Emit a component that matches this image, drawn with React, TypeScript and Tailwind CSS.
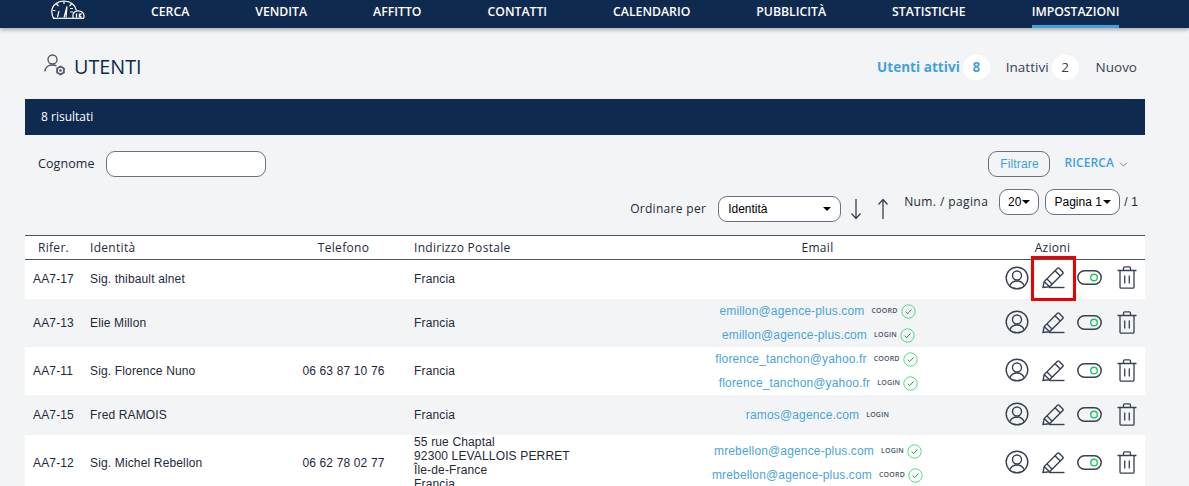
import { ChevronDown } from "lucide-react";

const navItems = ["CERCA", "VENDITA", "AFFITTO", "CONTATTI", "CALENDARIO", "PUBBLICITÀ", "STATISTICHE"];

type Mail = { address: string; tag: string; checked: boolean; offset: string };
type User = { ref: string; name: string; phone?: string; address: string[]; mails: Mail[]; height: string; shaded: boolean };

const users: User[] = [
  { ref: "AA7-17", name: "Sig. thibault alnet", address: ["Francia"], mails: [], height: "h-[39px] pb-[2px]", shaded: false },
  {
    ref: "AA7-13",
    name: "Elie Millon",
    address: ["Francia"],
    height: "h-[48px]",
    shaded: true,
    mails: [
      { address: "emillon@agence-plus.com", tag: "COORD", checked: true, offset: "" },
      { address: "emillon@agence-plus.com", tag: "LOGIN", checked: true, offset: "pl-[2px]" },
    ],
  },
  {
    ref: "AA7-11",
    name: "Sig. Florence Nuno",
    phone: "06 63 87 10 76",
    address: ["Francia"],
    height: "h-[48px]",
    shaded: false,
    mails: [
      { address: "florence_tanchon@yahoo.fr", tag: "COORD", checked: true, offset: "pr-[2px]" },
      { address: "florence_tanchon@yahoo.fr", tag: "LOGIN", checked: true, offset: "pl-[2px]" },
    ],
  },
  {
    ref: "AA7-15",
    name: "Fred RAMOIS",
    address: ["Francia"],
    height: "h-[40px]",
    shaded: true,
    mails: [{ address: "ramos@agence.com", tag: "LOGIN", checked: false, offset: "pl-[3px]" }],
  },
  {
    ref: "AA7-12",
    name: "Sig. Michel Rebellon",
    phone: "06 62 78 02 77",
    address: ["55 rue Chaptal", "92300 LEVALLOIS PERRET", "Île-de-France", "Francia"],
    height: "h-[56px]",
    shaded: false,
    mails: [
      { address: "mrebellon@agence-plus.com", tag: "LOGIN", checked: true, offset: "pl-[1px]" },
      { address: "mrebellon@agence-plus.com", tag: "COORD", checked: true, offset: "" },
    ],
  },
];

function GaugeLogo() {
  return (
    <svg width="34" height="20" viewBox="0 0 34 20" fill="none" stroke="#ffffff" strokeWidth="1.200">
      {/* big dial */}
      <path d="M4 18.300 H2.500 C1.300 16 0.800 14 0.800 11.500 C0.800 5.500 6.500 1 13 1 C19.500 1 24.500 5 25.500 10.500" />
      <path d="M2 18.300 H33" />
      <path d="M13 1 V4 M5.500 4 L7.500 6 M20.500 4 L18.500 6 M1.500 10.500 H4.500" />
      <path d="M6.500 17 L8 11 M13 17.500 L16 6.500 L15 17.500" />
      <path d="M19 8.500 H22 M19 12 H22" strokeWidth="0.900" />
      {/* small dial */}
      <path d="M22 18 V15 C22 12.500 24.500 10.800 27 10.800 C30.500 10.800 33 13 33 15.500 V18" />
      <path d="M25.500 13.500 V17.500 M28.500 13.500 V17.500 M28.500 15.500 L30.500 13.500 M28.500 15.500 L30.500 17.500" strokeWidth="1.300" />
    </svg>
  );
}

function UserGearIcon() {
  return (
    <svg width="23" height="23" viewBox="0 0 23 23" fill="none" stroke="#4b5563" strokeWidth="1.300">
      <circle cx="8.500" cy="5.500" r="4.500" />
      <path d="M1 17.500 C1 13.500 4 11 8.500 11 C10 11 11.500 11.300 12.500 11.800" />
      <path d="M16.500 11.500 L20.800 14 V19 L16.500 21.500 L12.200 19 V14 Z" fill="#4b5563" stroke="none" />
      <circle cx="16.500" cy="16.500" r="2" stroke="#f3f4f6" strokeWidth="1.300" />
    </svg>
  );
}

function ProfileIcon() {
  return (
    <svg width="24" height="24" viewBox="0 0 24 24" fill="none" stroke="#374151" strokeWidth="1.400">
      <circle cx="12" cy="12" r="10.800" />
      <circle cx="12" cy="9.500" r="4.500" />
      <path d="M4.800 19.800 C6 16.800 8.500 15 12 15 C15.500 15 18 16.800 19.200 19.800" />
    </svg>
  );
}

function PencilIcon() {
  return (
    <svg width="23" height="23" viewBox="0 0 23 23" fill="none" stroke="#374151" strokeWidth="1.400">
      <path d="M1 21.500 L2.200 15.500 L15.500 2.200 C16 1.700 16.600 1.700 17.100 2.200 L20.800 5.900 C21.300 6.400 21.300 7 20.800 7.500 L7.500 20.800 Z" />
      <path d="M13 4.700 L18.300 10 M2.200 15.500 L7.500 20.800 M5 13 L10 18" />
      <path d="M7 21.500 H22.500" />
    </svg>
  );
}

function ToggleIcon() {
  return (
    <svg width="25" height="15" viewBox="0 0 25 15" fill="none">
      <rect x="0.800" y="0.800" width="23.400" height="13.400" rx="6.700" stroke="#374151" strokeWidth="1.500" />
      <circle cx="17" cy="7.500" r="3.300" stroke="#22c55e" strokeWidth="1.400" />
    </svg>
  );
}

function TrashIcon() {
  return (
    <svg width="20" height="23" viewBox="0 0 20 23" fill="none" stroke="#374151" strokeWidth="1.300">
      <path d="M0.500 4.500 H19.500 M6.500 4.500 V2 C6.500 1.300 7 0.800 7.700 0.800 H12.300 C13 0.800 13.500 1.300 13.500 2 V4.500" />
      <path d="M3 4.500 V21 C3 21.700 3.500 22.200 4.200 22.200 H15.800 C16.500 22.200 17 21.700 17 21 V4.500" />
      <path d="M7.700 9.500 V17.500 M12.300 9.500 V17.500" />
    </svg>
  );
}

function CheckBadge() {
  return (
    <svg width="15" height="15" viewBox="0 0 15 15" fill="none" className="shrink-0">
      <circle cx="7.500" cy="7.500" r="6.700" stroke="#4ade80" strokeWidth="1" />
      <path d="M4.600 7.700 L6.700 9.700 L10.400 5.500" stroke="#15803d" strokeWidth="0.900" />
    </svg>
  );
}

function TallArrow({ up }: { up?: boolean }) {
  return (
    <svg width="12" height="22" viewBox="0 0 12 22" fill="none" stroke="#374151" strokeWidth="1.300">
      {up ? <path d="M6 21 V1.500 M1.500 6.500 L6 1.500 L10.500 6.500" /> : <path d="M6 1 V20.500 M1.500 15.500 L6 20.500 L10.500 15.500" />}
    </svg>
  );
}

function Pill({ children, className }: { children: React.ReactNode; className: string }) {
  return (
    <span className={`flex items-center justify-center rounded-[9px] border border-gray-500 bg-white text-black ${className}`}>
      {children}
    </span>
  );
}

function UserRow({ user }: { user: User }) {
  return (
    <div className={`flex items-center text-[12px] tracking-[0.15px] text-gray-800 ${user.height} ${user.shaded ? "bg-[#f3f4f6]" : "bg-white"}`}>
      <div className="w-[58px] pl-[8px]">{user.ref}</div>
      <div className="w-[200px] pl-[7px]">{user.name}</div>
      <div className="w-[121px] text-center">{user.phone}</div>
      <div className="w-[271px] pl-[10px] leading-[14px]">
        {user.address.map((line) => (
          <div key={line}>{line}</div>
        ))}
      </div>
      <div className="w-[285px] flex flex-col items-center gap-[6px]">
        {user.mails.map((mail) => (
          <div key={mail.address + mail.tag} className={`flex items-center h-[18px] ${mail.offset}`}>
            <span className="text-[#4ba3dc]">{mail.address}</span>
            <span className="ml-[7px] mr-[3px] text-[7px] tracking-[0.2px] font-semibold text-gray-600 font-['Open_Sans',sans-serif]">{mail.tag}</span>
            {mail.checked && <CheckBadge />}
          </div>
        ))}
      </div>
      <div className="w-[185px] flex items-center pl-[45px] -mt-[2px]">
        <ProfileIcon />
        <span className="ml-[13px]"><PencilIcon /></span>
        <span className="ml-[12px]"><ToggleIcon /></span>
        <span className="ml-[15px]"><TrashIcon /></span>
      </div>
    </div>
  );
}

export default function App() {
  return (
    <div className="relative h-[486px] overflow-hidden bg-[#f3f4f6] font-['Liberation_Sans',sans-serif]">
      {/* Top nav */}
      <nav className="relative h-[28px] bg-[#0f2a4f] shadow-[0_2px_4px_rgba(0,0,0,0.3)] flex items-start gap-[66px] pl-[151px] text-white font-['Open_Sans',sans-serif] font-semibold text-[12.25px]">
        <span className="absolute left-[51px] top-[0px]"><GaugeLogo /></span>
        {navItems.map((item) => (
          <span key={item} className="mt-[3px]">{item}</span>
        ))}
        <span className="h-[28px] pt-[3px] border-b-[3px] border-[#41a1dc]">IMPOSTAZIONI</span>
      </nav>

      <div className="mx-[25px] w-[1120px]">
        {/* Title row */}
        <div className="h-[71px] pt-[7px] flex items-center font-['Open_Sans',sans-serif]">
          <span className="ml-[19px] -mt-[3px]"><UserGearIcon /></span>
          <h1 className="ml-[7px] text-[19.800px] font-medium leading-[26px] text-[#0f2a4f]">UTENTI</h1>
          <div className="ml-auto flex items-center text-[13.500px] text-gray-700">
            <span className="font-bold text-[#41a1dc] tracking-[0.05px]">Utenti attivi</span>
            <span className="ml-[3px] w-[27px] h-[25px] rounded-full bg-white flex items-center justify-center font-bold text-[#41a1dc]">8</span>
            <span className="ml-[16px]">Inattivi</span>
            <span className="ml-[3px] w-[27px] h-[25px] rounded-full bg-white flex items-center justify-center">2</span>
            <span className="ml-[17px] mr-[8px]">Nuovo</span>
          </div>
        </div>

        <div className="h-[36px] bg-[#0f2a4f] flex items-center pl-[16px] text-white text-[12px] font-['Open_Sans',sans-serif]">8 risultati</div>

        {/* Filters */}
        <div className="h-[100px] flex flex-col">
          <div className="flex items-center h-[26px] mt-[16px] font-['Open_Sans',sans-serif] text-[12.500px] text-gray-800">
            <span className="ml-[13px] font-medium tracking-[0.1px]">Cognome</span>
            <span className="ml-[11px] w-[160px] h-[26px] rounded-[9px] border border-gray-500 bg-white" />
            <span className="ml-auto w-[62px] h-[26px] rounded-[9px] border border-gray-500 flex items-center justify-center text-[#41a1dc] text-[12px] tracking-[0.15px] font-['Liberation_Sans',sans-serif]">Filtrare</span>
            <span className="ml-[14px] -mt-[2px] font-semibold text-[#41a1dc] text-[12px] tracking-[0.1px]">RICERCA</span>
            <ChevronDown className="ml-[3px] mr-[15px] w-[13px] h-[13px] text-gray-600" strokeWidth={1.3} />
          </div>
          <div className="flex items-center h-[26px] mt-[19px] text-[12px] text-gray-800">
            <span className="ml-auto font-['Open_Sans',sans-serif] font-medium tracking-[0.3px]">Ordinare per</span>
            <Pill className="ml-[12px] w-[123px] h-[26px] !justify-between px-[9px]">
              <span>Identità</span>
              <span className="w-0 h-0 border-x-[4px] border-x-transparent border-t-[4px] border-t-black" />
            </Pill>
            <span className="ml-[9px]"><TallArrow /></span>
            <span className="ml-[15px]"><TallArrow up /></span>
            <div className="flex items-center relative top-[-7px]">
              <span className="ml-[15px] font-['Open_Sans',sans-serif] font-medium tracking-[0.4px]">Num. / pagina</span>
              <Pill className="ml-[11px] w-[40px] h-[26px] gap-[1px]">
                20
                <span className="w-0 h-0 border-x-[4px] border-x-transparent border-t-[4px] border-t-black" />
              </Pill>
              <Pill className="ml-[6px] w-[75px] h-[26px] gap-[1px]">
                Pagina 1
                <span className="w-0 h-0 border-x-[4px] border-x-transparent border-t-[4px] border-t-black" />
              </Pill>
              <span className="ml-[4px] mr-[7px] tracking-[0.15px]">/ 1</span>
            </div>
          </div>
        </div>

        {/* Table */}
        <div className="bg-white">
          <div className="h-[25px] flex items-center border-y border-gray-600 text-[12px] tracking-[0.3px] text-gray-800 font-['Open_Sans',sans-serif]">
            <div className="w-[58px] pl-[13px]">Rifer.</div>
            <div className="w-[200px] pl-[7px]">Identità</div>
            <div className="w-[121px] text-center">Telefono</div>
            <div className="w-[271px] pl-[10px]">Indirizzo Postale</div>
            <div className="w-[285px] text-center">Email</div>
            <div className="w-[185px] text-center">Azioni</div>
          </div>
          {users.map((user) => (
            <UserRow key={user.ref} user={user} />
          ))}
        </div>
      </div>

      {/* Red highlight */}
      <div className="absolute left-[1031px] top-[256px] w-[45px] h-[45px] border-[3px] border-[#ee0000]" />
    </div>
  );
}
